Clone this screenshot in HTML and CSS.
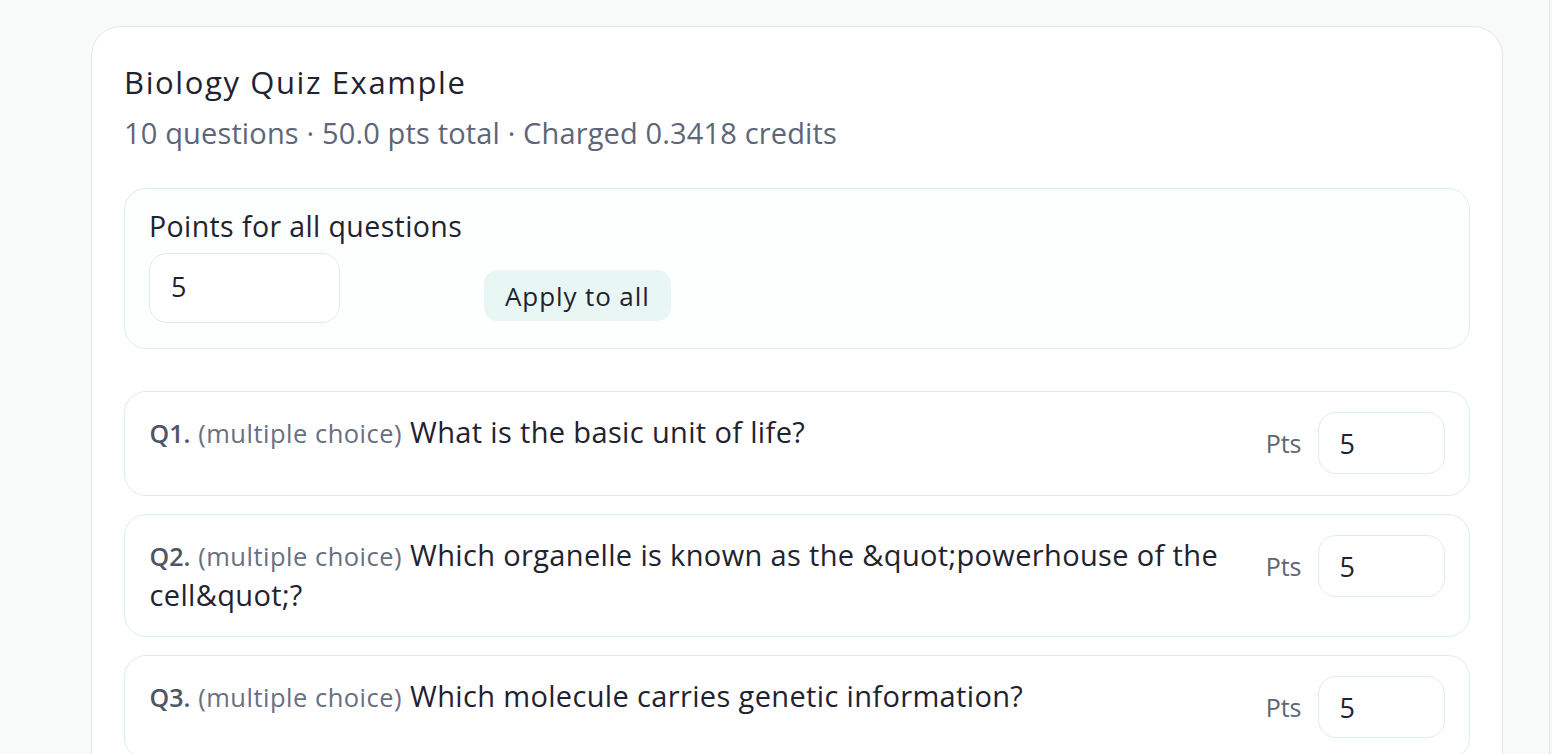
FILE: index.html
```html
<!DOCTYPE html>
<html lang="en">
<head>
<meta charset="utf-8">
<title>Biology Quiz Example</title>
<link rel="stylesheet" href="styles.css">
</head>
<body>
<div class="page">
  <main class="main">
    <section class="card">
      <h1 class="title">Biology Quiz Example</h1>
      <p class="subtitle">10 questions · 50.0 pts total · Charged 0.3418 credits</p>

      <div class="bulk">
        <div class="bulk-label">Points for all questions</div>
        <div class="bulk-row">
          <div class="field field-lg">5</div>
          <button class="apply" type="button">Apply to all</button>
        </div>
      </div>

      <div class="questions">
        <div class="q">
          <div class="q-text"><span class="q-num">Q1.</span> <span class="q-type">(multiple choice)</span> What is the basic unit of life?</div>
          <div class="pts"><span class="pts-label">Pts</span><div class="field field-sm">5</div></div>
        </div>
        <div class="q">
          <div class="q-text"><span class="q-num">Q2.</span> <span class="q-type">(multiple choice)</span> Which organelle is known as the &amp;quot;powerhouse of the cell&amp;quot;?</div>
          <div class="pts"><span class="pts-label">Pts</span><div class="field field-sm">5</div></div>
        </div>
        <div class="q">
          <div class="q-text"><span class="q-num">Q3.</span> <span class="q-type">(multiple choice)</span> Which molecule carries genetic information?</div>
          <div class="pts"><span class="pts-label">Pts</span><div class="field field-sm">5</div></div>
        </div>
      </div>
    </section>
  </main>
  <aside class="rail"></aside>
</div>
</body>
</html>
```

FILE: styles.css
```css
* { box-sizing: border-box; }

html, body {
  margin: 0;
  height: 100%;
}

body {
  background: #f8faf9;
  font-family: "Open Sans", "Noto Sans", sans-serif;
  color: #1f2330;
  overflow: hidden;
}

.page {
  display: flex;
  height: 100vh;
}

.main {
  flex: 1;
  padding: 26px 46px 0 91px;
}

.rail {
  width: 3px;
  border-left: 1px solid #e3e6e6;
  background: #f6f8f8;
}

.card {
  background: #ffffff;
  border: 1.5px solid #e4e7e8;
  border-radius: 30px;
  padding: 35px 32px 40px 32px;
}

.title {
  margin: 0;
  font-size: 31px;
  line-height: 40px;
  font-weight: 500;
  letter-spacing: 1.6px;
  color: #1f2330;
}

.subtitle {
  margin: 11px 0 0;
  font-size: 29px;
  line-height: 40px;
  letter-spacing: 0.15px;
  color: #5d6676;
}

.bulk {
  margin-top: 34.5px;
  border: 1.5px solid #d9efe9;
  border-radius: 22px;
  padding: 19.5px 24px 24.5px 24px;
  background: #fdfefe;
}

.bulk-label {
  font-size: 28.5px;
  line-height: 36px;
  font-weight: 500;
  letter-spacing: 0.4px;
  color: #1f2330;
}

.bulk-row {
  margin-top: 9px;
  display: flex;
  align-items: flex-end;
  gap: 144px;
}

.field {
  border: 1.5px solid #d9efe9;
  border-radius: 18px;
  background: #ffffff;
  color: #1f2330;
  display: flex;
  align-items: center;
  font-size: 27px;
}

.field-lg {
  width: 191px;
  height: 70px;
  padding-left: 21px;
  padding-bottom: 3px;
}

.field-sm {
  width: 127px;
  height: 62px;
  padding-left: 21px;
}

.apply {
  margin-bottom: 2px;
  height: 51px;
  padding: 0 21px;
  border: none;
  border-radius: 14px;
  background: #e9f7f4;
  color: #1f2330;
  font-family: inherit;
  font-size: 26px;
  font-weight: 500;
  letter-spacing: 0.9px;
}

.questions {
  margin-top: 42px;
  display: flex;
  flex-direction: column;
  gap: 18px;
}

.q {
  border: 1.5px solid #d9efe9;
  border-radius: 22px;
  padding: 20.5px 24.5px 20.5px 24.5px;
  display: flex;
  align-items: flex-start;
  gap: 24px;
}

.q-text {
  flex: 1;
  font-size: 29px;
  line-height: 40px;
  letter-spacing: 0.35px;
  color: #1f2330;
}

.q-num {
  font-size: 25px;
  line-height: 1;
  font-weight: 600;
  letter-spacing: 0;
  color: #4d5667;
}

.q-type {
  font-size: 25.5px;
  line-height: 1;
  letter-spacing: 0.5px;
  color: #677081;
}

.pts {
  display: flex;
  align-items: center;
  gap: 16px;
}

.pts-label {
  font-size: 25px;
  font-weight: 500;
  color: #5d6676;
}
```
